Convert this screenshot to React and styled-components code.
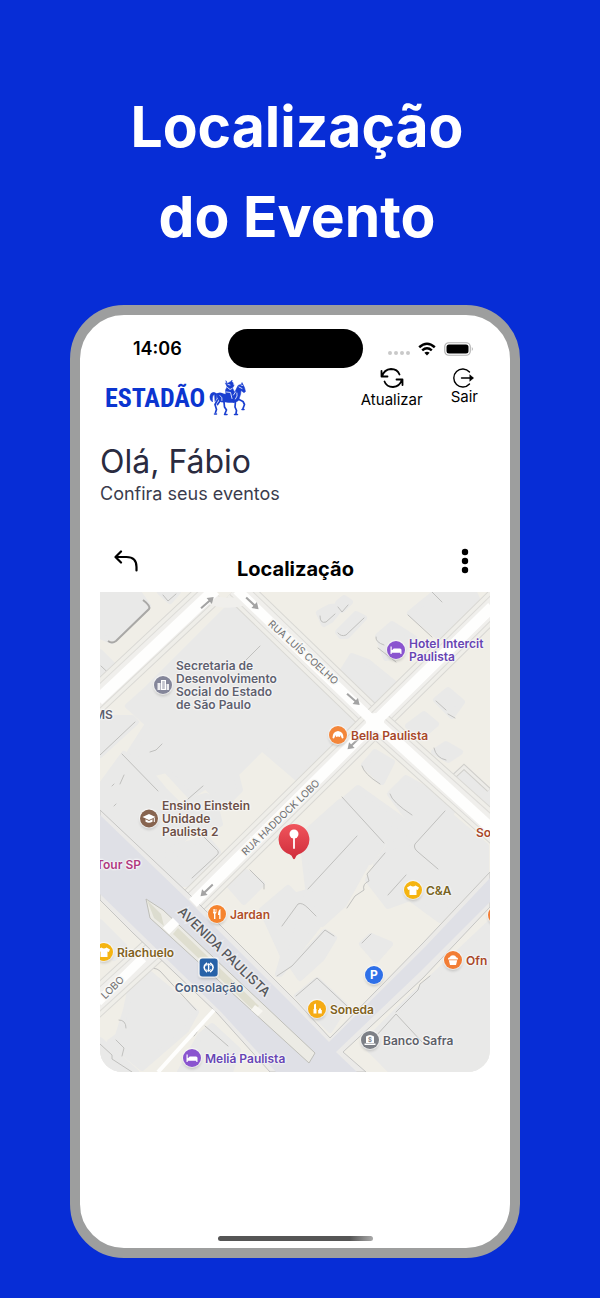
import styled, { createGlobalStyle } from "styled-components";

const GlobalStyle = createGlobalStyle`
*{
    box-sizing:border-box;
}
body{
    margin:0;
    background:#072dd6;
    font-family:Inter,"Liberation Sans",sans-serif;
}
button{
    font-family:inherit;
    color:inherit;
    background:none;
    border:none;
    padding:0;
    cursor:pointer;
}
h1,h2,p,ul{
    margin:0;
    padding:0;
}
`;

//map drawing is in its own coordinates, pins use the same ones
const MAP = { x: 100, y: 592, w: 390, h: 480 };

const blocks = [
    "100,592 138,592 148,606 112,641 100,636",
    "160,592 178,592 170,601",
    "100,652 116,668 104,682 100,682",
    "228,608 240,608 300,662 354,710 356,722 297,778 262,748 236,774 240,790 224,806 206,786 190,796 166,770 150,774 130,752 148,724 128,706 146,690",
    "100,718 132,718 136,722 100,755",
    "124,754 146,768 164,790 180,806 192,800 206,796 214,800 220,824 190,832 168,856 190,878 192,884 176,884 102,812 102,784",
    "192,878 218,852 206,838 168,850",
    "319,613 330,607 342,606 331,620 324,624",
    "338,603 344,598 350,602 342,610",
    "338,632 356,614 364,618 347,636 341,636",
    "378,636 392,624 414,638 398,656 386,658",
    "410,613 436,592 474,592 480,606 440,638",
    "342,672 352,656 368,662 400,688 378,700 370,700 334,676",
    "436,700 448,690 462,702 452,716",
    "408,726 424,714 436,724 420,738",
    "364,765 375,752 392,762 382,782",
    "390,794 406,778 442,798 452,812 412,850 408,818",
    "344,800 358,788 400,818 383,842",
    "302,836 340,802 383,844 370,862 338,862 308,888",
    "308,892 340,864 366,864 344,904 322,924 294,896",
    "396,822 406,820 412,846 402,868 376,864 388,848",
    "414,848 446,812 486,846 486,872 440,920 410,898 388,906 368,880 386,854",
    "230,886 246,872 262,884 244,902",
    "262,910 288,888 314,915 306,928 290,942 284,958",
    "278,974 298,906 310,904 318,926 290,962 280,974",
    "292,966 325,932 334,938 322,958 300,978",
    "297,996 317,980 345,1006 330,1030",
    "362,944 371,936 390,944 376,960",
    "394,1014 420,989 489,924 489,1072 392,1072 364,1044",
    "150,974 196,1012 186,1030 142,1068 110,1042 118,1036 126,1010 132,982",
    "100,1040 136,1072 112,1072 100,1060",
    "200,1036 212,1026 238,1050 230,1072 180,1072",
    "100,922 116,938 124,946 114,958 100,946",
    "454,776 464,768 489,792 489,804",
    "434,752 446,744 460,752 448,760",
];

const edges = [
    "M163 595 L168 601 L176 594",
    "M260 646 L246 660",
    "M100 755 L135 722",
    "M122 754 L158 791",
    "M150 752 L156 750 L162 744",
    "M188 799 L203 786",
    "M192 878 L217 855 Q220 852 216 849 L204 837",
    "M320 616 Q320 624 326 622 L335 614",
    "M338 633 Q341 637 346 635 L364 618",
    "M338 607 L342 612 L348 605",
    "M408 615 L432 637",
    "M432 592 L442 602",
    "M376 637 Q375 642 384 645 M378 648 L396 662",
    "M436 701 L446 710 M448 714 L455 718",
    "M434 748 Q436 758 446 760",
    "M362 766 Q364 774 380 784",
    "M390 794 Q392 802 412 815",
    "M342 797 L384 843",
    "M445 811 L415 844 Q413 848 418 852 L438 869",
    "M357 836 L308 889",
    "M385 853 L367 874 L369 881 Q362 884 364 890 L355 896 L347 908",
    "M406 875 L388 895",
    "M282 926 L298 904 Q302 902 308 908 L316 916",
    "M277 976 L292 966 L325 930 L334 936",
    "M362 943 L371 934",
    "M296 996 L317 978 L347 1006",
    "M376 1036 L396 1014 L422 1042",
    "M396 1012 L418 990 L420 984 L430 976",
    "M148 970 Q154 966 160 971 L196 1010",
    "M119 1020 Q126 1020 126 1028 M116 1040 L124 1048 L122 1056",
    "M100 1044 L112 1055 L112 1059 L132 1072",
    "M205 1026 L228 1046 M194 1036 L197 1032",
    "M114 806 L116 804 M120 784 L124 775 M112 786 L114 784",
    "M250 870 L264 884 L264 889",
    "M102 850 L116 864 M101 666 L118 682",
];

const Street = ({ d }) => (
    <g fill="none" strokeLinejoin="round">
        <path d={d} stroke="#d9d8d4" strokeWidth="28" />
        <path d={d} stroke="#efeee9" strokeWidth="26" />
        <path d={d} stroke="#dddcd8" strokeWidth="19" />
        <path d={d} stroke="#f0efec" strokeWidth="17" />
    </g>
);

const streetPaths = [
    "M90 705 L213 590",
    "M236 588 L375 722",
    "M500 599 L375 722 L186 908",
    "M375 722 L500 834",
    "M160 944 L90 1008",
];

const Arrow = ({ x, y, r }) => (
    <g transform={`translate(${x} ${y}) rotate(${r})`} fill="none" stroke="#a3a3a3" strokeWidth="2">
        <path d="M-8 0 H5" />
        <path d="M3 -4 L9 0 L3 4 Z" fill="#a3a3a3" stroke="none" />
    </g>
);

const MapDrawing = () => (
    <MapSvg viewBox={`${MAP.x} ${MAP.y} ${MAP.w} ${MAP.h}`} aria-hidden="true">
        <rect x="100" y="592" width="390" height="480" fill="#f0eee7" />
        {blocks.map((points) => (
            <polygon key={points} points={points} fill="#e9e9e8" stroke="#e9e9e8" strokeWidth="6" strokeLinejoin="round" />
        ))}
        <g fill="none" stroke="#c0c0be" strokeWidth="1" strokeLinecap="round" strokeLinejoin="round">
            {edges.map((d) => (
                <path key={d} d={d} />
            ))}
        </g>
        <path d="M143 600 Q151 606 149 609 L116 641 Q112 644 108 641" fill="none" stroke="#a9a8a6" strokeWidth="2" />
        <path d="M450 780 L464 767 L489 790" fill="none" stroke="#d0cfcb" strokeWidth="5" />
        <path d="M450 780 L464 767 L489 790" fill="none" stroke="#edece8" strokeWidth="3" />
        {streetPaths.map((d) => (
            <Street key={d} d={d} />
        ))}
        <path d="M208 599 Q227 606 246 600" fill="none" stroke="#f0efec" strokeWidth="10" />

        {/* avenida + side road */}
        <path
            d="M100 810 L187 892 L297 1002 L330 1038 L423 943 L490 872 L490 907 L423 978 L343 1052 L366 1072 L270 1072 L217 1013 L133 933 L100 900 Z"
            fill="#ebeae8"
            stroke="#c6c6c4"
            strokeWidth="1"
        />
        <path
            d="M100 815 L186 898 L295 1007 L329 1042 L425 947 L490 878 L490 902 L421 971 L336 1052 L357 1072 L276 1072 L221 1012 L137 930 L100 894 Z"
            fill="#dfe0e6"
        />
        <path d="M146 899 L163 910 L315 1053 L309 1063 L150 918 Z" fill="#ecebe5" stroke="#bfbfb9" strokeWidth="1" />
        <path d="M147 900 L161 914 L164 926 L154 918 Z" fill="#dcdccf" />
        <path d="M178 928 L259 1006 L254 1011 L173 934 Z" fill="#dfdecf" />
        <path d="M255 1005 L263 1011 L258 1016 L251 1010 Z" fill="#f7f6f1" />
        <g fill="none" stroke="#fefefd" strokeLinecap="butt">
            <path d="M98 700 L215 590" strokeWidth="12" />
            <path d="M237 590 L375 723" strokeWidth="10" />
            <path d="M492 607 L375 722 L193 903" strokeWidth="11" />
            <path d="M373 720 L492 829" strokeWidth="11" />
            <path d="M176 921 L166 931" strokeWidth="9" />
            <path d="M143 958 L98 1002" strokeWidth="9" />
            <path d="M214 1010 L158 1072" strokeWidth="4" />
        </g>
        <circle cx="375" cy="722" r="9" fill="#fefefd" />
        <Arrow x={207} y={603} r={-42} />
        <Arrow x={252} y={603} r={43} />
        <Arrow x={353} y={699} r={42} />
        <Arrow x={354} y={743} r={136} />
        <Arrow x={207} y={890} r={136} />

        <g fill="#6f6f70" stroke="#f8f8f6" strokeWidth="3" paintOrder="stroke" textAnchor="middle" fontFamily="Inter, sans-serif">
            <text fontSize="10" transform="translate(301 655) rotate(42)">RUA LUÍS COELHO</text>
            <text fontSize="10" transform="translate(283 820) rotate(-44)">RUA HADDOCK LOBO</text>
            <text fontSize="10" transform="translate(115 990) rotate(-44)">LOBO</text>
            <text fontSize="13" fontWeight="500" fill="#55565a" stroke="#e9eaee" transform="translate(221 955) rotate(44)">
                AVENIDA PAULISTA
            </text>
        </g>
    </MapSvg>
);

const glyphs = {
    building: (
        <g>
            <path d="M7 4h5v10h-5z" />
            <path d="M3.500 7h3v7h-3zM12.500 8h2.500v6h-2.500z" opacity=".85" />
            <path d="M8.200 6h2.600M8.200 8h2.600M8.200 10h2.600M8.200 12h2.600" stroke="#84869a" fill="none" />
        </g>
    ),
    bed: <path d="M3.500 5.500h1.200v3.500h.8q0-1.500 1.500-1.500h6q1.500 0 1.500 1.500v4h-1.200v-1.300h-8.600v1.300h-1.200z" />,
    cap: (
        <g>
            <path d="M2.500 7.500l6.500-3 6.500 3-6.500 3z" />
            <path d="M5.500 9.800v2.500q3.500 2 7 0v-2.500l-3.500 1.700zM13.800 8.500h1v4h-1z" />
        </g>
    ),
    croissant: (
        <path d="M3.500 12q0-6.500 5.500-7 5.500.500 5.500 7-1.500 1-2-.500l-1-2.500-.500 2-2-.5-2 .5-.5-2-1 2.500q-.5 1.500-2 .5z" />
    ),
    shirt: <path d="M6.500 4.500q2.500 1.800 5 0l3.500 2-1.200 2.500-1.300-.5v5.500h-7v-5.500l-1.300.5-1.200-2.500z" />,
    fork: (
        <g>
            <path d="M5 4v3.500q0 1 1 1.300v5.200h1.400v-5.200q1-.3 1-1.300v-3.500h-.8v3h-.6v-3h-.8v3h-.6v-3z" />
            <path d="M12.500 4v10h-1.300v-4h-1.200q0-5 2.500-6z" />
        </g>
    ),
    cupcake: (
        <g>
            <path d="M4 8.500q-.5-2 1.800-2.300.5-2 3.200-2 2.700 0 3.200 2 2.300.3 1.800 2.300z" />
            <path d="M4.800 9.300h8.400l-1.200 4.700h-6z" />
        </g>
    ),
    lipstick: (
        <g>
            <path d="M6 4.500l2-1v5.500h.5v4.500h-3v-4.500h.5z" />
            <path d="M11 8.500h2v1.500h.8v3.500h-3.600v-3.500h.8z" />
        </g>
    ),
    bank: (
        <g>
            <path d="M3.500 12.500h11v1.500h-11zM5 5.500q4-3 8 0v6.500h-8z" />
            <text x="9" y="11" fontSize="6" fontWeight="700" textAnchor="middle" fill="#7d8087">$</text>
        </g>
    ),
    parking: <text x="9" y="13" fontSize="12" fontWeight="700" textAnchor="middle">P</text>,
    metro: (
        <g fill="none" stroke="#fff">
            <path d="M7.500 4.500Q1.500 9 7.500 13.500M10.500 4.500Q16.500 9 10.500 13.500" strokeWidth="1.600" />
            <path d="M9 5v8" strokeWidth="1.400" />
            <path d="M7 7.200l2-2 2 2M7 10.800l2 2 2-2" strokeWidth="1" />
        </g>
    ),
};

const places = [
    { x: 163, y: 685, name: "Secretaria de\nDesenvolvimento\nSocial do Estado\nde São Paulo", icon: "building", bg: "#84869a", color: "#5f616f" },
    { x: 396, y: 650, name: "Hotel Intercit\nPaulista", icon: "bed", bg: "#8a54cf", color: "#6745b3" },
    { x: 338, y: 735, name: "Bella Paulista", icon: "croissant", bg: "#f3863a", color: "#a8482a" },
    { x: 149, y: 818, name: "Ensino Einstein\nUnidade\nPaulista 2", icon: "cap", bg: "#87644f", color: "#6d5148" },
    { x: 413, y: 890, name: "C&A", icon: "shirt", bg: "#f5b411", color: "#786422" },
    { x: 217, y: 914, name: "Jardan", icon: "fork", bg: "#f5842f", color: "#b04f2a" },
    { x: 104, y: 952, name: "Riachuelo", icon: "shirt", bg: "#f5b411", color: "#7f6120" },
    { x: 453, y: 960, name: "Ofn", icon: "cupcake", bg: "#f27d35", color: "#a8482a" },
    { x: 374, y: 975, name: "", icon: "parking", bg: "#2f70e8", color: "#2f70e8" },
    { x: 317, y: 1009, name: "Soneda", icon: "lipstick", bg: "#f5ab14", color: "#7f6120" },
    { x: 370, y: 1040, name: "Banco Safra", icon: "bank", bg: "#7d8087", color: "#5d6068" },
    { x: 192, y: 1058, name: "Meliá Paulista", icon: "bed", bg: "#8a54cf", color: "#6745b3" },
    { x: 497, y: 915, name: "", icon: "fork", bg: "#f27d35", color: "#a8482a" },
    { x: 94, y: 714, name: "MS", color: "#5f616f" },
    { x: 96, y: 864, name: "Tour SP", color: "#b0397f" },
    { x: 476, y: 832, name: "So", color: "#a8482a" },
];

const Wifi = () => (
    <svg width="18" height="14" viewBox="0 0 18 14" fill="none" stroke="#000" strokeWidth="2.500" aria-hidden="true">
        <path d="M1.200 5.200q7.800-7 15.600 0" />
        <path d="M4.200 8.400q4.800-4.200 9.600 0" />
        <path d="M9 13.500l-2.600-2.800q2.600-2 5.200 0z" fill="#000" stroke="none" />
    </svg>
);

const Battery = () => (
    <svg width="30" height="14" viewBox="0 0 30 14" aria-hidden="true">
        <rect x=".75" y=".75" width="25.500" height="12.500" rx="4" fill="none" stroke="#b2b2b2" strokeWidth="1.200" />
        <rect x="2.500" y="2.500" width="22" height="9" rx="2.500" />
        <path d="M27.800 5q2.200 2 0 4z" fill="#b2b2b2" />
    </svg>
);

const Refresh = () => (
    <svg width="24" height="20" viewBox="0 0 24 20" fill="none" stroke="#000" strokeWidth="1.800" strokeLinecap="round" strokeLinejoin="round" aria-hidden="true">
        <path d="M1.500 3v5.500h6M2 8.500q2-7 9-7.500 6.500 0 8.500 5.500" />
        <path d="M22.500 17v-5.500h-6M22 11.500q-2 7-9 7.500-6.500 0-8.500-5.500" />
    </svg>
);

const Exit = () => (
    <svg width="22" height="20" viewBox="0 0 22 20" fill="none" stroke="#000" strokeWidth="1.400" strokeLinecap="round" aria-hidden="true">
        <path d="M16.500 4a9 9 0 1 0 0 12" />
        <path d="M8.500 10h11" />
        <path d="M17 7l3.500 3-3.500 3z" fill="#000" strokeWidth=".6" />
    </svg>
);

const Horse = () => (
    <svg width="38" height="36" viewBox="0 0 38 36" fill="#1a3fd0" stroke="#1a3fd0" strokeLinecap="round" strokeLinejoin="round" aria-hidden="true">
        {/* tail */}
        <path d="M8 14q-3-3-6-.5-2 3-.5 6.500l2 2q-.5-4 .5-6.500l1.500-1 .5 7 1.500-3z" strokeWidth=".5" />
        {/* body, neck and head */}
        <path d="M8 13.500q3-1.500 7 .5l7 .5q4-1 5-5l2-4 3.500-1.500.5-1.500 1 2 1.500 3 1 4-1.500 1.200-3-2.200q0 4-1.500 7-.5 4-4 4.500-5 1-10 0-5 1-7-2-2-3-1.500-6.500z" strokeWidth=".5" />
        {/* legs */}
        <path d="M8.500 20l-2.500 4.500 1.500 5-1 3M11 21l-2.500 3.500M15 22l.5 5 2 3-1.500 3.500M26.500 21l-.5 6 1.500 3.500-.5 3M29 19l5 2.500 1.500 3-1.500 4" fill="none" strokeWidth="1.700" />
        <path d="M5.500 34h2M15.500 34.500h2.500M25.500 34.500h3M33 29.500h2" strokeWidth="1.500" />
        {/* rider */}
        <path d="M16.500 3l2 .5 3-2 2.500 1 .5 3.500-1 2 2.500 5-1.500 1.500.5 6 2 1.500-3 .5-1.500-6-5.500-1.500-.5-5 1.500-3z" strokeWidth=".5" />
        <path d="M17 1l1 2M23 0l-.5 2M25 5.500l-1.500 1" fill="none" strokeWidth="1" />
        {/* highlights */}
        <path d="M18.500 7.500l2.500 2 2-1M17.500 12l4 .5 1.500 6M11 15.500q3 2 2 5M28 13q1 3-1.500 6M30 7l3 1.500M19 4.500l2 .5M32 5l1.500.5M24.500 15l2-3" fill="none" stroke="#fff" strokeWidth=".8" />
    </svg>
);

const Back = () => (
    <svg width="24" height="22" viewBox="0 0 24 22" fill="none" stroke="#000" strokeWidth="2.200" strokeLinecap="round" strokeLinejoin="round" aria-hidden="true">
        <path d="M7 1.500L1.500 7 7 12.500" />
        <path d="M2 7h10.500q10 0 10 10v3.500" />
    </svg>
);

const Dots = () => (
    <svg width="24" height="26" viewBox="0 0 24 26" aria-hidden="true">
        <circle cx="12" cy="4" r="3.200" />
        <circle cx="12" cy="13" r="3.200" />
        <circle cx="12" cy="22" r="3.200" />
    </svg>
);

const EventPin = () => (
    <svg width="34" height="38" viewBox="0 0 34 38" role="img" aria-label="Local do evento">
        <defs>
            <linearGradient id="pinRed" x1="0" y1="0" x2="0" y2="1">
                <stop offset="0" stopColor="#f0555c" />
                <stop offset="1" stopColor="#cf2c3b" />
            </linearGradient>
        </defs>
        <path d="M17 1a15.500 15.500 0 0 1 4.500 30.300q-2.500 1-3.500 4.200-1 1.500-2 0-1-3.200-3.500-4.200a15.500 15.500 0 0 1 4.500-30.300z" fill="url(#pinRed)" />
        <circle cx="17" cy="11" r="4.500" fill="#fff" />
        <path d="M17 14v11" stroke="#fff" strokeWidth="1.800" strokeLinecap="round" />
    </svg>
);

const App = () => {
    return <Page>
        <GlobalStyle />
        <Title>Localização<br />do Evento</Title>
        <Phone>
            <StatusBar>
                <Time>14:06</Time>
                <Island />
                <Signals>
                    <Cell><i /><i /><i /><i /></Cell>
                    <Wifi />
                    <Battery />
                </Signals>
            </StatusBar>
            <Header>
                <Logo>
                    <span>ESTADÃO</span>
                    <Horse />
                </Logo>
                <Actions>
                    <Action $gap="3px"><Refresh />Atualizar</Action>
                    <Action $gap="0"><Exit />Sair</Action>
                </Actions>
            </Header>
            <Greeting>
                <h2>Olá, Fábio</h2>
                <p>Confira seus eventos</p>
            </Greeting>
            <Toolbar>
                <button type="button" aria-label="Voltar"><Back /></button>
                <h2>Localização</h2>
                <button type="button" aria-label="Mais opções"><Dots /></button>
            </Toolbar>
            <MapBox>
                <MapDrawing />
                {places.map((p) => (
                    <Place key={p.x + "-" + p.y} $x={p.x} $y={p.y} $color={p.color} $icon={p.icon}>
                        {p.icon && <Badge $bg={p.bg} viewBox="0 0 18 18">{glyphs[p.icon]}</Badge>}
                        {p.name && <span>{p.name}</span>}
                    </Place>
                ))}
                <Station $x={209} $y={976} $color="#4c5f7d">
                    <Badge $bg="#2762a8" $square viewBox="0 0 18 18">{glyphs.metro}</Badge>
                    <span>Consolação</span>
                </Station>
                <Marker $x={294} $y={861}><EventPin /></Marker>
            </MapBox>
            <HomeBar />
        </Phone>
    </Page>;
};

const Page = styled.main`
min-height:100vh;
padding:82px 80px 40px 70px;
display:flex;
flex-direction:column;
background:#072dd6;
`;
const Title = styled.h1`
color:#fff;
text-align:center;
font-size:57px;
font-weight:700;
line-height:90px;
margin-bottom:43px;
padding-left:4px;
white-space:nowrap;
`;
const Phone = styled.section`
flex:1;
display:flex;
flex-direction:column;
padding:14px 20px 7px;
background:#fff;
border:10px solid #9d9e9e;
border-radius:54px;
`;
const StatusBar = styled.div`
display:grid;
grid-template-columns:1fr 135px 1fr;
align-items:center;
height:39px;
`;
const Time = styled.span`
padding-left:33px;
font-size:18px;
font-weight:600;
`;
const Island = styled.div`
height:39px;
border-radius:20px;
background:#000;
`;
const Signals = styled.div`
display:flex;
align-items:center;
justify-content:flex-end;
gap:8px;
padding-right:16px;
`;
const Cell = styled.span`
display:flex;
gap:2px;
padding-top:8px;
i{
    width:4px;
    height:4px;
    border-radius:50%;
    background:#c9c9c9;
}
`;
const Header = styled.header`
display:flex;
justify-content:space-between;
align-items:flex-start;
padding:0 12px 0 5px;
`;
const Logo = styled.div`
display:flex;
align-items:center;
gap:4px;
padding-top:12px;
color:#0b35d0;
span{
    font-family:"Roboto Condensed","Liberation Sans Narrow","Liberation Sans",sans-serif;
    font-size:26px;
    font-weight:700;
    line-height:36px;
}
`;
const Actions = styled.nav`
display:flex;
align-items:flex-start;
gap:28px;
`;
const Action = styled.button.attrs({ type: "button" })`
display:flex;
flex-direction:column;
align-items:center;
gap:${(p) => p.$gap};
font-size:15px;
line-height:18px;
`;
const Greeting = styled.div`
padding-top:26px;
color:#2a2b40;
h2{
    font-size:32px;
    font-weight:400;
    line-height:40px;
}
p{
    font-size:18px;
    line-height:24px;
    color:#3b3c4d;
}
`;
const Toolbar = styled.div`
display:flex;
justify-content:space-between;
align-items:center;
padding:0 13px 0 14px;
margin:33px 0 9px;
height:44px;
h2{
    font-size:20px;
    font-weight:700;
    line-height:26px;
    padding-top:16px;
}
svg{
    display:block;
}
`;
const MapBox = styled.div`
position:relative;
width:100%;
aspect-ratio:${MAP.w} / ${MAP.h};
overflow:hidden;
border-radius:0 0 22px 22px;
`;
const MapSvg = styled.svg`
display:block;
width:100%;
height:100%;
`;
const Pinned = styled.div`
position:absolute;
left:${(p) => ((p.$x - MAP.x) / MAP.w) * 100}%;
top:${(p) => ((p.$y - MAP.y) / MAP.h) * 100}%;
display:flex;
align-items:center;
gap:4px;
color:${(p) => p.$color};
font-size:12px;
font-weight:600;
line-height:13px;
white-space:pre;
text-shadow:0 0 2px #fff,0 0 2px #fff,0 0 3px #fff;
`;
const Place = styled(Pinned)`
transform:translate(${(p) => (p.$icon ? "-9px" : "0")},-50%);
`;
const Station = styled(Pinned)`
flex-direction:column;
transform:translate(-50%,-50%);
`;
const Marker = styled(Pinned)`
transform:translate(-50%,-100%);
`;
const Badge = styled.svg`
flex:none;
width:18px;
height:18px;
fill:#fff;
text-shadow:none;
border-radius:${(p) => (p.$square ? "3px" : "50%")};
background:${(p) => p.$bg};
box-shadow:0 0 1px 1px rgba(255,255,255,0.7),0 2px 3px rgba(0,0,0,0.2);
`;
const HomeBar = styled.div`
width:155px;
height:5px;
margin:auto auto 0;
border-radius:3px;
background:linear-gradient(90deg,#555 0%,#555 85%,#aaa 100%);
`;

export default App;
